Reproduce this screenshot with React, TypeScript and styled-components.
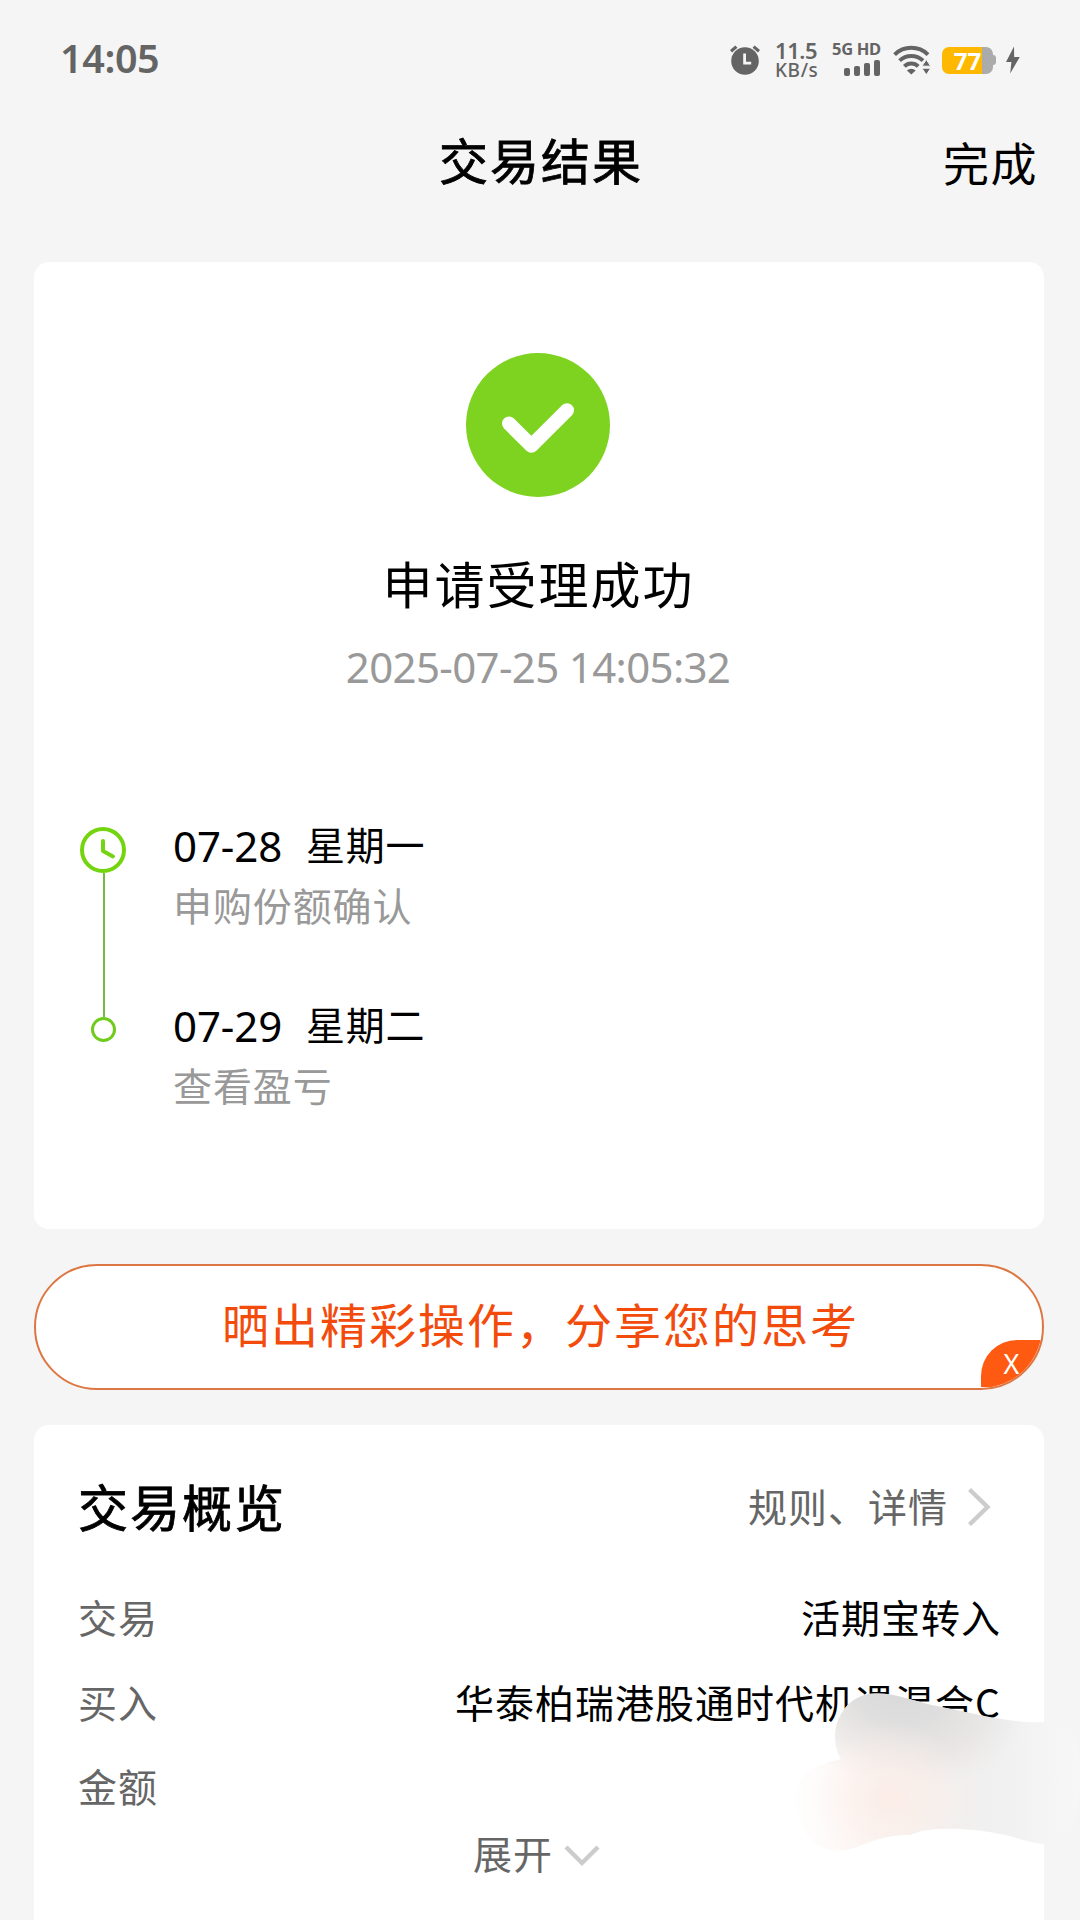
import React from 'react';
import styled, { createGlobalStyle } from 'styled-components';

const GlobalStyle = createGlobalStyle`
  * { box-sizing: border-box; }
  body {
    margin: 0;
    background: #f5f5f5;
    font-family: 'Noto Sans CJK SC', sans-serif;
    color: #000;
  }
`;

const Screen = styled.div`
  position: relative;
  display: flex;
  flex-direction: column;
  width: 1080px;
  height: 1920px;
  overflow: hidden;
  background: #f5f5f5;
`;

const StatusBar = styled.header`
  display: flex;
  flex: none;
  align-items: center;
  justify-content: space-between;
  height: 120px;
  padding: 0 59px 0 60px;
  color: #646464;
`;

const Time = styled.span`
  margin-top: -4px;
  font: 600 39.5px/48px 'Noto Sans', 'Open Sans', sans-serif;
  letter-spacing: -0.4px;
`;

const StatusIcons = styled.div`
  display: flex;
  align-items: center;
`;

const Stack = styled.div<{ $w: number; $ml: number; $up?: number }>`
  display: flex;
  flex-direction: column;
  width: ${(p) => p.$w}px;
  margin-left: ${(p) => p.$ml}px;
  margin-bottom: ${(p) => p.$up ?? 0}px;
`;

const Tiny = styled.span<{ $size: number; $lh: number; $ls?: number; $weight?: number }>`
  font: ${(p) => p.$weight ?? 600} ${(p) => p.$size}px/${(p) => p.$lh}px 'Noto Sans', sans-serif;
  letter-spacing: ${(p) => p.$ls ?? 0}px;
  white-space: nowrap;
`;

const Bars = styled.div`
  display: flex;
  align-items: flex-end;
  justify-content: flex-end;
  gap: 4px;
  height: 17px;
  margin-top: 3px;
`;

const Bar = styled.i<{ $h: number }>`
  width: 6px;
  height: ${(p) => p.$h}px;
  border-radius: 2px;
  background: #646464;
`;

const Battery = styled.div`
  display: flex;
  align-items: center;
  margin-left: 11px;
`;

const BatteryBody = styled.div`
  display: flex;
  align-items: center;
  justify-content: center;
  width: 51px;
  height: 27px;
  border-radius: 7px;
  background: linear-gradient(90deg, #ffb800 0 40px, #ababab 40px);
  color: #fff;
  font: 700 24px/27px 'Noto Sans', sans-serif;
`;

const BatteryNub = styled.i`
  width: 3px;
  height: 10px;
  border-radius: 0 3px 3px 0;
  background: #ababab;
`;

const NavBar = styled.nav`
  display: grid;
  flex: none;
  grid-template-columns: 1fr auto 1fr;
  align-items: center;
  height: 86px;
  margin-bottom: 56px;
  padding: 0 42px 5px;
`;

const NavTitle = styled.h1`
  grid-column: 2;
  margin: -4px -2px 0 0;
  font-size: 49px;
  font-weight: 400;
  -webkit-text-stroke: 0.8px #000;
  line-height: 76px;
  letter-spacing: 2px;
`;

const NavAction = styled.span`
  justify-self: end;
  font-size: 46px;
  line-height: 76px;
  letter-spacing: 1.5px;
`;

const Card = styled.section<{ $h: number }>`
  display: flex;
  flex-direction: column;
  flex: none;
  height: ${(p) => p.$h}px;
  margin: 0 36px 0 34px;
  border-radius: 15px;
  background: #fff;
`;

const Result = styled.div`
  display: flex;
  flex-direction: column;
  align-items: center;
  padding-top: 91px;
  padding-right: 2px;
`;

const ResultTitle = styled.h2`
  margin: 47px -1px 0 0;
  font-size: 50px;
  font-weight: 400;
  line-height: 76px;
  letter-spacing: 2px;
`;

const ResultTime = styled.time`
  margin-top: 9px;
  font: 400 42px/76px 'Noto Sans', sans-serif;
  letter-spacing: -0.65px;
  color: #999;
`;

const Timeline = styled.div`
  display: flex;
  margin-top: 106px;
  padding-left: 46px;
`;

const Rail = styled.div`
  display: flex;
  flex-direction: column;
  align-items: center;
  width: 46px;
  margin-right: 47px;
  padding-top: 16px;
`;

const RailLine = styled.i`
  width: 2px;
  height: 144px;
  margin-left: 1px;
  background: #79b843;
`;

const Dot = styled.i`
  width: 25px;
  height: 25px;
  border: 3px solid #6fcb1c;
  border-radius: 50%;
`;

const Steps = styled.div`
  display: flex;
  flex-direction: column;
  gap: 59px;
  padding-top: 2px;
`;

const Step = styled.div`
  display: flex;
  flex-direction: column;
  height: 121px;
`;

const StepDate = styled.div`
  display: flex;
  height: 61px;
  font-size: 39px;
  line-height: 61px;
  letter-spacing: 0.8px;
`;

const Digits = styled.span`
  width: 133px;
  font: 400 42px/65px 'Noto Sans', sans-serif;
  letter-spacing: -0.1px;
`;

const StepNote = styled.div`
  height: 60px;
  font-size: 39px;
  line-height: 60px;
  letter-spacing: 0.9px;
  color: #999;
`;

const ShareButton = styled.div`
  position: relative;
  display: flex;
  flex: none;
  align-items: center;
  justify-content: center;
  height: 126px;
  margin: 35px 36px 35px 34px;
  border: 2px solid #dc7743;
  border-radius: 63px;
  background: #fff;
  overflow: hidden;
  color: #f24b0c;
  font-size: 47px;
  letter-spacing: 2px;
  line-height: 70px;
  padding: 0 0 8px 3px;
`;

const CloseCorner = styled.button`
  position: absolute;
  right: 0;
  bottom: 1px;
  width: 61px;
  height: 47px;
  padding: 0;
  border: 0;
  border-radius: 36px 0 0 0;
  background: #ff5a12;
  color: #fff;
  font: 400 27px/47px 'Noto Sans', sans-serif;
`;

const OverviewHead = styled.div`
  display: flex;
  align-items: center;
  justify-content: space-between;
  height: 80px;
  margin-top: 40px;
  padding: 0 52px 0 44px;
`;

const OverviewTitle = styled.h2`
  margin: 0;
  font-size: 50px;
  font-weight: 400;
  -webkit-text-stroke: 0.8px #000;
  line-height: 76px;
  letter-spacing: 2px;
`;

const MoreLink = styled.span`
  display: flex;
  align-items: center;
  gap: 20px;
  color: #666;
  font-size: 39px;
  line-height: 60px;
  letter-spacing: 1px;

  svg { margin-top: 3px; }
`;

const Rows = styled.dl`
  display: flex;
  flex-direction: column;
  margin: 29px 0 0;
  padding: 0 43px 0 44px;
`;

const Row = styled.div`
  display: flex;
  justify-content: space-between;
  height: 84.7px;
  font-size: 39px;
  line-height: 85px;
  letter-spacing: 1px;
`;

const Label = styled.dt`
  color: #666;
`;

const Value = styled.dd`
  margin: 0;
`;

const Expand = styled.div`
  display: flex;
  align-items: center;
  justify-content: center;
  gap: 11px;
  height: 60px;
  padding-right: 5px;
  margin-top: -6px;
  color: #666;
  font-size: 39px;
  line-height: 60px;
  letter-spacing: 1px;

  svg { margin-top: 7px; }
`;

const Smudge = styled.svg`
  position: absolute;
  left: 740px;
  top: 1680px;
`;

const AlarmIcon = () => (
  <svg width="30" height="30" viewBox="0 0 30 30">
    <circle cx="15" cy="16" r="13.8" fill="#646464" />
    <path d="M1 6.2 6.4 1.6M29 6.2l-5.4-4.6" stroke="#646464" strokeWidth="3.2" />
    <path d="M14.6 8.6v9.6h6.6" fill="none" stroke="#f5f5f5" strokeWidth="2.8" />
  </svg>
);

const WifiIcon = () => (
  <svg width="38" height="30" viewBox="0 0 38 30">
    <g fill="none" stroke="#646464" strokeWidth="4">
      <path d="M1.6 9.6a24 24 0 0 1 33.4 0" />
      <path d="M6.6 15.6a17 17 0 0 1 23.4 0" />
      <path d="M11.4 21.4a9.8 9.8 0 0 1 13.8 0" />
    </g>
    <path d="M18.3 29.4l-4.4-4a6.6 6.6 0 0 1 8.8 0z" fill="#646464" />
    <path d="M33.3 14.6l4.4 6.6h-8.8zM33.3 29.8l4.4-6.6h-8.8z" fill="#646464" stroke="#f5f5f5" />
  </svg>
);

const Bolt = styled.svg`
  margin-left: 9px;
`;

const BoltIcon = () => (
  <Bolt width="16" height="28" viewBox="0 0 16 28">
    <path d="M9 .5 1 16h5.4L5.2 27.5 14.8 11H9.2z" fill="#646464" />
  </Bolt>
);

const steps = [
  { date: '07-28', day: '星期一', note: '申购份额确认' },
  { date: '07-29', day: '星期二', note: '查看盈亏' },
];

const rows = [
  { label: '交易', value: '活期宝转入' },
  { label: '买入', value: '华泰柏瑞港股通时代机遇混合C' },
  { label: '金额', value: '' },
];

export default function App() {
  return (
    <Screen>
      <GlobalStyle />
      <StatusBar>
        <Time>14:05</Time>
        <StatusIcons>
          <AlarmIcon />
          <Stack $w={45} $ml={15}>
            <Tiny $size={22} $lh={20} $ls={-0.4}>11.5</Tiny>
            <Tiny $size={19} $lh={20} $weight={500} $ls={0.6}>KB/s</Tiny>
          </Stack>
          <Stack $w={48} $ml={12} $up={2}>
            <Tiny $size={16.5} $lh={14} $weight={700} $ls={-0.3}>5G HD</Tiny>
            <Bars>
              <Bar $h={8.5} />
              <Bar $h={10.5} />
              <Bar $h={13} />
              <Bar $h={16} />
            </Bars>
          </Stack>
          <Stack $w={38} $ml={13}><WifiIcon /></Stack>
          <Battery>
            <BatteryBody>77</BatteryBody>
            <BatteryNub />
          </Battery>
          <BoltIcon />
        </StatusIcons>
      </StatusBar>

      <NavBar>
        <NavTitle>交易结果</NavTitle>
        <NavAction>完成</NavAction>
      </NavBar>

      <Card $h={967}>
        <Result>
          <svg width="144" height="144" viewBox="0 0 144 144">
            <circle cx="72" cy="72" r="72" fill="#7ed321" />
            <path d="M43 70.5l22.4 22.3L101 57.2" fill="none" stroke="#fff" strokeWidth="14" strokeLinecap="round" strokeLinejoin="round" />
          </svg>
          <ResultTitle>申请受理成功</ResultTitle>
          <ResultTime>2025-07-25 14:05:32</ResultTime>
        </Result>
        <Timeline>
          <Rail>
            <svg width="46" height="46" viewBox="0 0 46 46">
              <g fill="none" stroke="#74d40f" strokeWidth="4" strokeLinecap="round" strokeLinejoin="round">
                <circle cx="23" cy="23" r="21" />
                <path d="M23 14v10l10 5.4" />
              </g>
            </svg>
            <RailLine />
            <Dot />
          </Rail>
          <Steps>
            {steps.map((s) => (
              <Step key={s.date}>
                <StepDate>
                  <Digits>{s.date}</Digits>
                  {s.day}
                </StepDate>
                <StepNote>{s.note}</StepNote>
              </Step>
            ))}
          </Steps>
        </Timeline>
      </Card>

      <ShareButton>
        晒出精彩操作，分享您的思考
        <CloseCorner>X</CloseCorner>
      </ShareButton>

      <Card $h={520}>
        <OverviewHead>
          <OverviewTitle>交易概览</OverviewTitle>
          <MoreLink>
            规则、详情
            <svg width="24" height="40" viewBox="0 0 24 40">
              <path d="M1.5 2.5l18 17.5-18 17.5" fill="none" stroke="#ccc" strokeWidth="4.4" />
            </svg>
          </MoreLink>
        </OverviewHead>
        <Rows>
          {rows.map((r) => (
            <Row key={r.label}>
              <Label>{r.label}</Label>
              <Value>{r.value}</Value>
            </Row>
          ))}
        </Rows>
        <Expand>
          展开
          <svg width="36" height="22" viewBox="0 0 36 22">
            <path d="M2 2l16 16L34 2" fill="none" stroke="#ccc" strokeWidth="4.4" />
          </svg>
        </Expand>
      </Card>

      <Smudge width="340" height="180" viewBox="0 420 1020 540">
        <defs>
          <linearGradient id="base" x1="165" x2="1020" y1="0" y2="0" gradientUnits="userSpaceOnUse">
            <stop offset="0" stopColor="#fefefe" />
            <stop offset=".2" stopColor="#fdf8f6" />
            <stop offset=".5" stopColor="#f3efed" />
            <stop offset=".7" stopColor="#f0f0f0" />
            <stop offset="1" stopColor="#f7f7f7" />
          </linearGradient>
          <radialGradient id="grey" cx="0" cy="0" r="1" gradientUnits="userSpaceOnUse" gradientTransform="translate(470 450) rotate(14) scale(400 290)">
            <stop offset="0" stopColor="#d9d9d9" />
            <stop offset=".35" stopColor="#dcdcdc" stopOpacity=".9" />
            <stop offset=".7" stopColor="#e2dfde" stopOpacity=".55" />
            <stop offset="1" stopColor="#e8e6e5" stopOpacity="0" />
          </radialGradient>
          <radialGradient id="peach" cx="450" cy="775" r="230" gradientUnits="userSpaceOnUse">
            <stop offset="0" stopColor="#fbebe5" stopOpacity=".9" />
            <stop offset=".5" stopColor="#fbeee9" stopOpacity=".5" />
            <stop offset="1" stopColor="#fdf0ea" stopOpacity="0" />
          </radialGradient>
          <clipPath id="blob">
            <path d="M285 590C287 515 340 460 410 460C480 462 530 488 600 500C690 517 770 540 870 547L940 547C995 552 1025 600 1020 720C1015 850 980 908 910 912C860 908 830 890 780 882C700 864 590 862 545 873L510 885C430 882 370 915 340 925Q315 932 290 932C215 930 165 850 165 770C167 710 220 672 303 658Q285 630 285 590Z" />
          </clipPath>
        </defs>
        <g clipPath="url(#blob)">
          <rect y="420" width="1020" height="540" fill="url(#base)" />
          <rect y="420" width="1020" height="540" fill="url(#grey)" />
          <rect y="420" width="1020" height="540" fill="url(#peach)" />
        </g>
      </Smudge>
    </Screen>
  );
}
